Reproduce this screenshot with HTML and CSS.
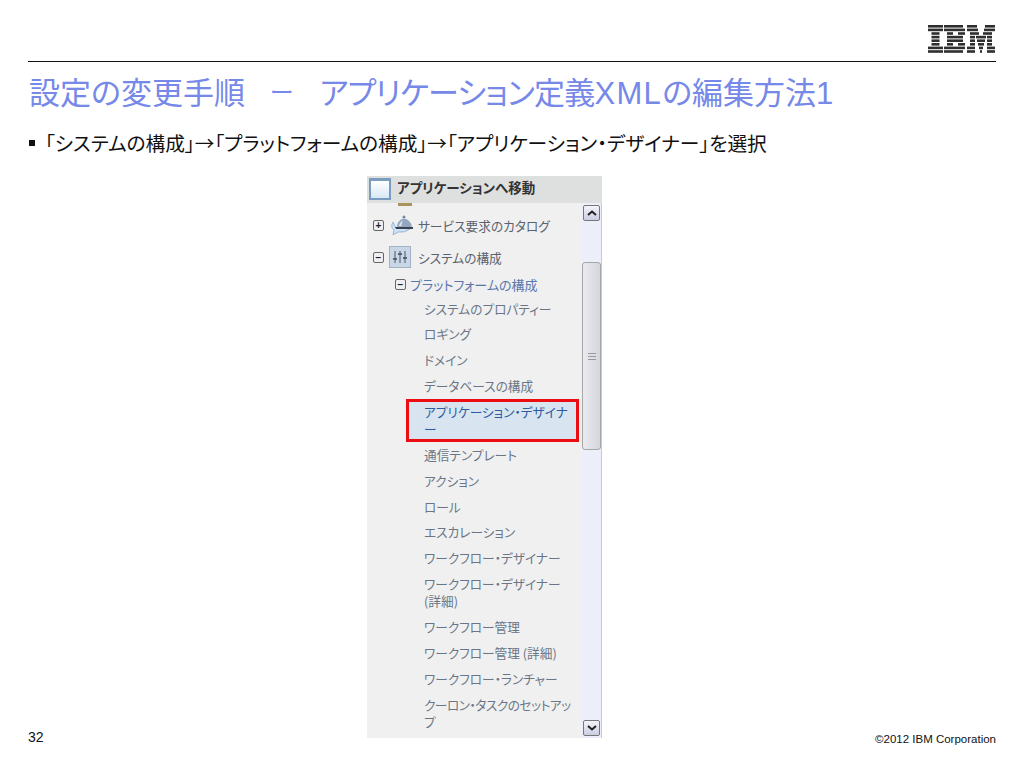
FILE: index.html
```html
<!DOCTYPE html>
<html lang="ja">
<head>
<meta charset="utf-8">
<title>設定の変更手順</title>
<link rel="stylesheet" href="styles.css">
</head>
<body>
<div class="slide">
  <header class="top">
    <svg class="ibm" viewBox="0 0 68 28" width="68" height="28" aria-label="IBM">
      <g fill="#2e2e2e">
        <rect x="0" y="0" width="15" height="2.600"/><rect x="16" y="0" width="19" height="2.600"/><rect x="39" y="0" width="10" height="2.600"/><rect x="57" y="0" width="10" height="2.600"/>
        <rect x="0" y="3.600" width="15" height="2.600"/><rect x="16" y="3.600" width="21" height="2.600"/><rect x="39" y="3.600" width="11" height="2.600"/><rect x="56" y="3.600" width="11" height="2.600"/>
        <rect x="3.500" y="7.200" width="8" height="2.600"/><rect x="19" y="7.200" width="6" height="2.600"/><rect x="30" y="7.200" width="7" height="2.600"/><rect x="42" y="7.200" width="9" height="2.600"/><rect x="55" y="7.200" width="9" height="2.600"/>
        <rect x="3.500" y="10.800" width="8" height="2.600"/><rect x="19" y="10.800" width="16" height="2.600"/><rect x="42" y="10.800" width="5" height="2.600"/><rect x="48" y="10.800" width="10" height="2.600"/><rect x="59" y="10.800" width="5" height="2.600"/>
        <rect x="3.500" y="14.400" width="8" height="2.600"/><rect x="19" y="14.400" width="16" height="2.600"/><rect x="42" y="14.400" width="5" height="2.600"/><rect x="49" y="14.400" width="8" height="2.600"/><rect x="59" y="14.400" width="5" height="2.600"/>
        <rect x="3.500" y="18" width="8" height="2.600"/><rect x="19" y="18" width="6" height="2.600"/><rect x="30" y="18" width="7" height="2.600"/><rect x="42" y="18" width="5" height="2.600"/><rect x="50" y="18" width="6" height="2.600"/><rect x="59" y="18" width="5" height="2.600"/>
        <rect x="0" y="21.600" width="15" height="2.600"/><rect x="16" y="21.600" width="21" height="2.600"/><rect x="39" y="21.600" width="8" height="2.600"/><rect x="51" y="21.600" width="4" height="2.600"/><rect x="59" y="21.600" width="8" height="2.600"/>
        <rect x="0" y="25.200" width="15" height="2.600"/><rect x="16" y="25.200" width="19" height="2.600"/><rect x="39" y="25.200" width="8" height="2.600"/><rect x="52" y="25.200" width="2" height="2.600"/><rect x="59" y="25.200" width="8" height="2.600"/>
      </g>
    </svg>
  </header>
  <h1 class="title">設定の変更手順<span class="dash">　ー　</span><span class="kana">アプリケーション定義</span><span class="latin">XML</span>の編集方法1</h1>
  <p class="bullet"><span class="mark"></span>「システムの構成」→「プラットフォームの構成」→「アプリケーション・デザイナー」を選択</p>
  <div class="stage">
    <div class="page-no">32</div>
    <section class="panel">
      <div class="panel-head">
        <span class="head-icon"></span>
        <span class="head-text">アプリケーションへ移動</span>
      </div>
      <div class="panel-body">
        <div class="tree">
          <div class="stub"></div>
          <div class="top-row row-service">
            <span class="box">+</span>
            <svg class="icon-service" viewBox="0 0 22 20" width="22" height="20">
              <path d="M2 7 Q-1 12 3 15 L2 20 L7 17 Q14 18 19 14 L5 13 Z" fill="#cfe3f8" stroke="#8fb0d4" stroke-width="0.900"/>
              <circle cx="13" cy="2" r="1.600" fill="#7b8ca2"/>
              <path d="M6 12 Q6 5 13 3.500 Q20 5 21 12 Z" fill="#93a7c0"/>
              <path d="M8 11 Q8.500 7 12 5.500 Q10.500 8 10.500 11 Z" fill="#dbe5ef"/>
              <path d="M4 12 H22 V14 H5 Z" fill="#38434f"/>
            </svg>
            <span class="top-label">サービス要求のカタログ</span>
          </div>
          <div class="top-row row-system">
            <span class="box">−</span>
            <svg class="icon-system" viewBox="0 0 22 22" width="22" height="22">
              <rect x="0.500" y="0.500" width="21" height="21" fill="#c9d6e6" stroke="#a3b3c6"/>
              <path d="M6 5V17M11 5V17M16 5V17" stroke="#4b5a6b"/>
              <path d="M4 13H8M9 8H13M14 12H18" stroke="#3d4c5c" stroke-width="1.500"/>
            </svg>
            <span class="top-label">システムの構成</span>
          </div>
          <div class="sub-row">
            <span class="box">−</span>
            <span class="sub-label">プラットフォームの構成</span>
          </div>
          <ul class="items">
            <li>システムのプロパティー</li>
            <li>ロギング</li>
            <li>ドメイン</li>
            <li>データベースの構成</li>
            <li class="selected">アプリケーション・デザイナ<br>ー</li>
            <li>通信テンプレート</li>
            <li>アクション</li>
            <li>ロール</li>
            <li>エスカレーション</li>
            <li>ワークフロー・デザイナー</li>
            <li>ワークフロー・デザイナー<br>(詳細)</li>
            <li>ワークフロー管理</li>
            <li>ワークフロー管理 (詳細)</li>
            <li>ワークフロー・ランチャー</li>
            <li class="tight">クーロン・タスクのセットアッ<br>プ</li>
          </ul>
        </div>
        <div class="scrollbar">
          <div class="arrow"><svg viewBox="0 0 10 6" width="10" height="6"><path d="M1 5L5 1.500L9 5" fill="none" stroke="#222" stroke-width="2"/></svg></div>
          <div class="track-a"></div>
          <div class="thumb"><span class="grip"></span></div>
          <div class="track-b"></div>
          <div class="arrow"><svg viewBox="0 0 10 6" width="10" height="6"><path d="M1 1L5 4.500L9 1" fill="none" stroke="#222" stroke-width="2"/></svg></div>
        </div>
      </div>
    </section>
    <div class="copyright">©2012 IBM Corporation</div>
  </div>
</div>
</body>
</html>
```

FILE: styles.css
```css
* { box-sizing: border-box; }
html, body { margin: 0; padding: 0; background: #fff; }
body { font-family: "Liberation Sans", "Noto Sans CJK JP", sans-serif; color: #111; }
.slide { width: 1024px; height: 768px; overflow: hidden; display: flex; flex-direction: column; }
.top { margin: 25px 28px 0; height: 37px; border-bottom: 1px solid #111; display: flex; justify-content: flex-end; align-items: flex-start; }
.ibm { display: block; }
.title { margin: 13px 0 0 29px; font-size: 31px; line-height: 38px; font-weight: 400; color: #7688e8; white-space: nowrap; font-feature-settings: "palt"; height: 38px; }
.dash { font-size: 24px; letter-spacing: 1px; vertical-align: 3px; line-height: 1; }
.kana { letter-spacing: -0.800px; }
.latin { letter-spacing: 1.300px; }
.bullet { margin: 18px 0 0 29px; font-family: "Noto Sans CJK JP", sans-serif; font-size: 19.700px; line-height: 24px; color: #111; display: flex; align-items: center; white-space: nowrap; font-feature-settings: "palt"; }
.mark { width: 6px; height: 6px; background: #111; margin-right: 10px; flex: none; }
.stage { margin-top: 21px; padding-left: 28px; display: grid; grid-template-columns: 339px 235px 394px; height: 562px; }
.page-no { align-self: end; font-size: 14px; line-height: 16px; margin-bottom: -7px; color: #111; }
.copyright { align-self: end; justify-self: end; font-size: 11.500px; line-height: 14px; margin-bottom: -8px; color: #111; }
.panel { height: 562px; display: flex; flex-direction: column; background: #f0f0f0; overflow: hidden; color: #6a7687; font-family: "Noto Sans CJK JP", sans-serif; font-feature-settings: "palt"; }
.panel-head { height: 27px; flex: none; background: #dedfdf; display: flex; align-items: center; padding-left: 2px; }
.head-icon { width: 22px; height: 22px; margin-bottom: 1px; background: linear-gradient(#fff, #d8e8f6); border: 2px solid #7a9cc0; border-top-width: 3px; }
.head-text { margin: 0 0 6px 6px; font-size: 13.500px; font-weight: 700; color: #333; white-space: nowrap; }
.panel-body { flex: 1; display: flex; min-height: 0; }
.tree { flex: 1; min-width: 0; overflow: hidden; }
.stub { width: 14px; height: 3px; margin-left: 31px; background: #a8955e; }
.top-row { display: flex; align-items: center; height: 22px; padding-left: 6px; font-size: 12.700px; color: #5a626d; white-space: nowrap; }
.row-service { margin-top: 8px; }
.row-system { margin-top: 10px; }
.box { width: 11px; height: 11px; border: 1px solid #666; border-radius: 2px; background: #efefef; font-family: "Liberation Sans", sans-serif; font-size: 10px; line-height: 9px; text-align: center; color: #222; font-weight: 700; flex: none; }
.icon-service { margin-left: 7px; }
.icon-system { margin-left: 5px; }
.row-service .top-label { margin-left: 5px; }
.top-label { margin-left: 7px; }
.sub-row { display: flex; align-items: center; margin-top: 7px; height: 18px; padding-left: 28px; font-size: 13px; color: #5a76ab; white-space: nowrap; }
.sub-label { margin-left: 4px; }
.items { list-style: none; margin: 2.500px 0 0 39px; padding: 0; font-size: 12.700px; line-height: 17.500px; width: 173px; }
.items li { padding: 4.150px 0 4.150px 18px; white-space: nowrap; }
.items .tight { letter-spacing: -0.500px; }
.selected { color: #2c5ca0; background: #d9e4f1; outline: 3px solid #ec0d13; outline-offset: -3px; }
.scrollbar { width: 20px; flex: none; display: flex; flex-direction: column; background: #eceefa; border-right: 1px solid #c9c9c9; }
.arrow { height: 16px; margin: 2px 1px; border: 1px solid #777; border-radius: 2px; background: linear-gradient(#f4f4fa, #cbcde2); display: flex; align-items: center; justify-content: center; flex: none; }
.track-a { height: 39px; flex: none; }
.thumb { height: 188px; flex: none; border: 1px solid #a7a7a7; border-radius: 3px; background: linear-gradient(90deg, #eaeaf0, #d4d6dd); display: flex; align-items: center; justify-content: center; }
.grip { width: 8px; height: 7px; border-top: 1px solid #999; border-bottom: 1px solid #999; background: linear-gradient(#999, #999) center/100% 1px no-repeat; }
.track-b { flex: 1; }
```
